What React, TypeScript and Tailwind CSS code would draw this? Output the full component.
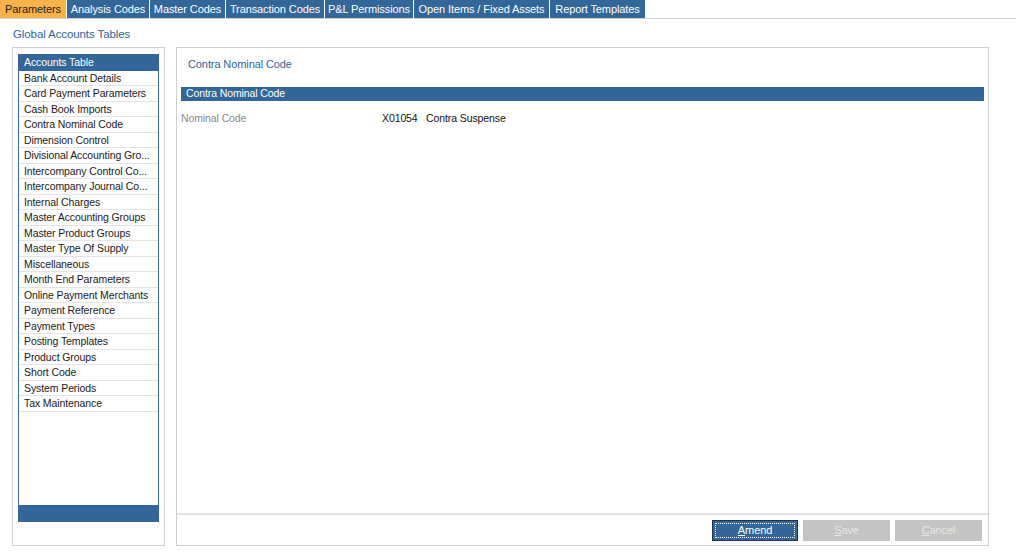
const tabs = [
  { label: "Parameters", w: "w-[66px]", active: true },
  { label: "Analysis Codes", w: "w-[82px]" },
  { label: "Master Codes", w: "w-[75px]" },
  { label: "Transaction Codes", w: "w-[98px]" },
  { label: "P&L Permissions", w: "w-[88px]" },
  { label: "Open Items / Fixed Assets", w: "w-[135px]" },
  { label: "Report Templates", w: "w-[95px]" },
];

const items = [
  "Accounts Table",
  "Bank Account Details",
  "Card Payment Parameters",
  "Cash Book Imports",
  "Contra Nominal Code",
  "Dimension Control",
  "Divisional Accounting Gro...",
  "Intercompany Control Co...",
  "Intercompany Journal Co...",
  "Internal Charges",
  "Master Accounting Groups",
  "Master Product Groups",
  "Master Type Of Supply",
  "Miscellaneous",
  "Month End Parameters",
  "Online Payment Merchants",
  "Payment Reference",
  "Payment Types",
  "Posting Templates",
  "Product Groups",
  "Short Code",
  "System Periods",
  "Tax Maintenance",
];

export default function App() {
  return (
    <div className="h-[558px] w-[1016px] bg-white font-['Liberation_Sans',Arial,sans-serif] text-[10.5px] tracking-[-0.1px] text-[#111]">
      <div className="flex h-[19px] border-b border-[#d4d4d4]">
        {tabs.map((t) => (
          <div
            key={t.label}
            className={`${t.w} mr-px flex h-[18px] items-center justify-center text-[11px] ${
              t.active ? "bg-[#f7b24a] text-[#222]" : "bg-[#336699] text-white"
            }`}
          >
            {t.label}
          </div>
        ))}
      </div>

      <div className="pl-[13px] pt-[8px] text-[11.5px] leading-[14px] text-[#2f6599]">Global Accounts Tables</div>

      <div className="mt-[6px] flex gap-[11px] pl-[12px]">
        <div className="flex h-[499px] w-[153px] flex-col border border-[#d0d0d0] px-[5px] pt-[6px]">
          <div className="flex h-[468px] flex-col border border-[#336699]">
            <div className="flex-1">
              {items.map((it, i) => (
                <div
                  key={it}
                  className={`flex h-[15.5px] items-center whitespace-nowrap border-b pl-[5px] text-[10.5px] leading-none ${
                    i === 0 ? "border-[#336699] bg-[#336699] text-white" : "border-[#e4e4e4] text-[#1a1a1a]"
                  }`}
                >
                  {it}
                </div>
              ))}
            </div>
            <div className="h-[16px] bg-[#336699]" />
          </div>
        </div>

        <div className="flex h-[499px] w-[813px] flex-col border border-[#d0d0d0]">
          <div className="flex-1 px-[4px]">
            <div className="pl-[7px] pt-[9px] text-[11px] leading-[14px] text-[#2f6599]">Contra Nominal Code</div>
            <div className="mt-[16px] flex h-[14px] items-center bg-[#336699] pl-[5px] text-white">Contra Nominal Code</div>
            <div className="mt-[10px] flex items-center">
              <div className="w-[201px] text-[#8a8a8a]">Nominal Code</div>
              <div>X01054&nbsp;&nbsp;&nbsp;Contra Suspense</div>
            </div>
          </div>
          <div className="flex h-[32px] items-center justify-end gap-[5px] border-t-2 border-[#e2e2e2] pr-[6px]">
            <button className="flex h-[21px] w-[86px] items-center justify-center border border-[#1d3350] bg-[#336699] p-[2px] text-[11px] text-white">
              <span className="flex h-full w-full items-center justify-center border border-dotted border-white">
                <u>A</u>mend
              </span>
            </button>
            <button className="flex h-[21px] w-[87px] items-center justify-center bg-[#c4c4c4] text-[11px] text-[#e6e6e6]">
              <span><u>S</u>ave</span>
            </button>
            <button className="flex h-[21px] w-[87px] items-center justify-center bg-[#c4c4c4] text-[11px] text-[#e6e6e6]">
              <span><u>C</u>ancel</span>
            </button>
          </div>
        </div>
      </div>
    </div>
  );
}
